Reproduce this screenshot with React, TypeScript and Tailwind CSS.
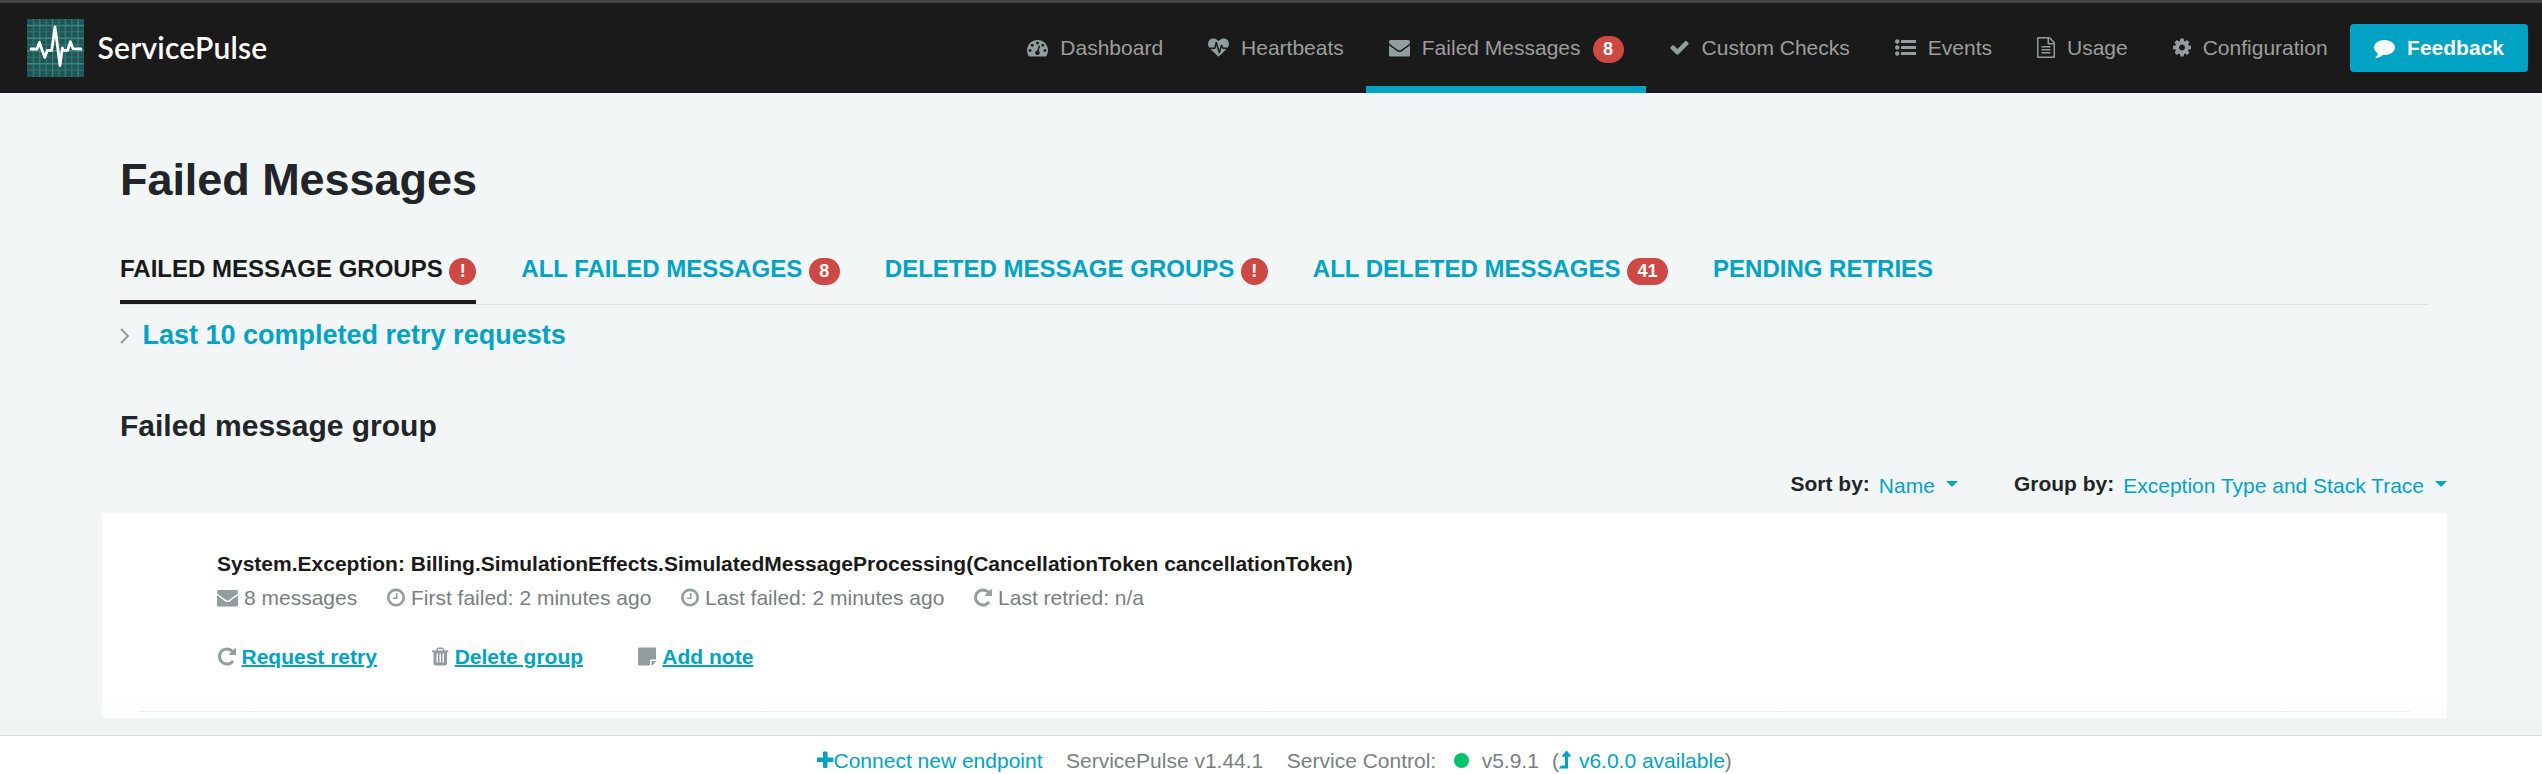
import React from "react";

type IconDef = { box: string; width: string; d: string };

const wide = { box: "0 0 1792 1792", width: "w-[21px]" };
const mid = { box: "128 0 1536 1792", width: "w-[18px]" };
const slim = { box: "192 0 1408 1792", width: "w-[16.5px]" };

const icons: Record<string, IconDef> = {
  dashboard: {
    ...wide,
    d: "M384 1152q0-53-37.5-90.5t-90.5-37.5-90.5 37.5-37.5 90.5 37.5 90.5 90.5 37.5 90.5-37.5 37.5-90.5zm192-448q0-53-37.5-90.5t-90.5-37.5-90.5 37.5-37.5 90.5 37.5 90.5 90.5 37.5 90.5-37.5 37.5-90.5zm428 481l101-382q6-26-7.5-48.5t-38.5-29.5-48 6.5-30 39.5l-101 382q-60 5-107 43.5t-63 98.5q-20 77 20 146t117 89 146-20 89-117q16-60-6-117t-72-91zm660-33q0-53-37.5-90.5t-90.5-37.5-90.5 37.5-37.5 90.5 37.5 90.5 90.5 37.5 90.5-37.5 37.5-90.5zm-640-640q0-53-37.5-90.5t-90.5-37.5-90.5 37.5-37.5 90.5 37.5 90.5 90.5 37.5 90.5-37.5 37.5-90.5zm448 192q0-53-37.5-90.5t-90.5-37.5-90.5 37.5-37.5 90.5 37.5 90.5 90.5 37.5 90.5-37.5 37.5-90.5zm320 448q0 261-141 483-19 29-54 29h-1402q-35 0-54-29-141-221-141-483 0-182 71-348t191-286 286-191 348-71 348 71 286 191 191 286 71 348z",
  },
  heartbeat: {
    ...wide,
    d: "M1280 1024h305q-5 6-10 10.5t-9 7.5l-3 4-623 600q-18 18-44 18t-44-18l-624-602q-5-2-21-20h369q22 0 39.5-13.5t22.5-34.5l70-281 190 667q6 20 23 33t39 13q21 0 38-13t23-33l146-485 56 112q18 35 57 35zm512-428q0 145-103 300h-369l-111-221q-8-17-25.5-27t-36.5-8q-45 5-56 46l-129 430-196-686q-6-20-23.5-33t-39.5-13-39 13.5-22 34.5l-116 464h-423q-103-155-103-300 0-220 127-344t351-124q62 0 126.5 21.5t120 58 95.5 68.5 76 68q36-36 76-68t95.5-68.5 120-58 126.5-21.5q224 0 351 124t127 344z",
  },
  envelope: {
    ...wide,
    d: "M1792 710v794q0 66-47 113t-113 47h-1472q-66 0-113-47t-47-113v-794q44 49 101 87 362 246 497 345 57 42 92.5 65.5t94.5 48 110 24.5h2q51 0 110-24.5t94.5-48 92.5-65.5q170-123 498-345 57-39 100-87zm0-294q0 79-49 151t-122 123q-376 261-468 325-10 7-42.5 31t-54 38.5-52 32.5-57.5 27-50 9h-2q-23 0-50-9t-57.5-27-52-32.5-54-38.5-42.5-31q-91-64-262-182.5t-205-142.5q-62-42-117-115.5t-55-136.5q0-78 41.5-130t118.5-52h1472q65 0 112.5 47t47.5 113z",
  },
  check: {
    ...wide,
    d: "M1671 566q0 40-28 68l-724 724-136 136q-28 28-68 28t-68-28l-136-136-362-362q-28-28-28-68t28-68l136-136q28-28 68-28t68 28l294 295 656-657q28-28 68-28t68 28l136 136q28 28 28 68z",
  },
  list: {
    ...wide,
    d: "M384 1408q0 80-56 136t-136 56-136-56-56-136 56-136 136-56 136 56 56 136zm0-512q0 80-56 136t-136 56-136-56-56-136 56-136 136-56 136 56 56 136zm1408 416v192q0 13-9.5 22.5t-22.5 9.5h-1216q-13 0-22.5-9.5t-9.5-22.5v-192q0-13 9.5-22.5t22.5-9.5h1216q13 0 22.5 9.5t9.5 22.5zm-1408-928q0 80-56 136t-136 56-136-56-56-136 56-136 136-56 136 56 56 136zm1408 416v192q0 13-9.5 22.5t-22.5 9.5h-1216q-13 0-22.5-9.5t-9.5-22.5v-192q0-13 9.5-22.5t22.5-9.5h1216q13 0 22.5 9.5t9.5 22.5zm0-512v192q0 13-9.5 22.5t-22.5 9.5h-1216q-13 0-22.5-9.5t-9.5-22.5v-192q0-13 9.5-22.5t22.5-9.5h1216q13 0 22.5 9.5t9.5 22.5z",
  },
  file: {
    ...mid,
    d: "M1596 380q28 28 48 76t20 88v1152q0 40-28 68t-68 28h-1344q-40 0-68-28t-28-68v-1600q0-40 28-68t68-28h896q40 0 88 20t76 48zm-444-244v376h376q-10-29-22-41l-313-313q-12-12-41-22zm384 1528v-1024h-416q-40 0-68-28t-28-68v-416h-768v1536h1280zm-1024-864q0-14 9-23t23-9h704q14 0 23 9t9 23v64q0 14-9 23t-23 9h-704q-14 0-23-9t-9-23v-64zm736 224q14 0 23 9t9 23v64q0 14-9 23t-23 9h-704q-14 0-23-9t-9-23v-64q0-14 9-23t23-9h704zm0 256q14 0 23 9t9 23v64q0 14-9 23t-23 9h-704q-14 0-23-9t-9-23v-64q0-14 9-23t23-9h704z",
  },
  cog: {
    ...mid,
    d: "M1152 896q0-106-75-181t-181-75-181 75-75 181 75 181 181 75 181-75 75-181zm512-109v222q0 12-8 23t-20 13l-185 28q-19 54-39 91 35 50 107 138 10 12 10 25t-9 23q-27 37-99 108t-94 71q-12 0-26-9l-138-108q-44 23-91 38-16 136-29 186-7 28-36 28h-222q-14 0-24.5-8.5t-11.5-21.5l-28-184q-49-16-90-37l-141 107q-10 9-25 9-14 0-25-11-126-114-165-168-7-10-7-23 0-12 8-23 15-21 51-66.5t54-70.5q-27-50-41-99l-183-27q-13-2-21-12.5t-8-23.5v-222q0-12 8-23t19-13l186-28q14-46 39-92-40-57-107-138-10-12-10-24 0-10 9-23 26-36 98.5-107.5t94.5-71.5q13 0 26 10l138 107q44-23 91-38 16-136 29-186 7-28 36-28h222q14 0 24.5 8.5t11.5 21.5l28 184q49 16 90 37l142-107q9-9 24-9 13 0 25 10 129 119 165 170 7 8 7 22 0 12-8 23-15 21-51 66.5t-54 70.5q26 50 41 98l183 28q13 2 21 12.5t8 23.5z",
  },
  comment: {
    ...wide,
    d: "M1792 896q0 174-120 321.5t-326 233-450 85.5q-70 0-145-8-198 175-460 242-49 14-114 22-17 2-30.5-9t-17.5-29v-1q-3-4-.5-12t2-10 4.5-9.5l6-9 7-8.5 8-9q7-8 31-34.5t34.5-38 31-39.5 32.5-51 27-59 26-76q-157-89-247.5-220t-90.5-281q0-130 71-248.5t191-204.5 286-136.5 348-50.5q244 0 450 85.5t326 233 120 321.5z",
  },
  clock: {
    ...mid,
    d: "M1024 544v448q0 14-9 23t-23 9h-320q-14 0-23-9t-9-23v-64q0-14 9-23t23-9h224v-352q0-14 9-23t23-9h64q14 0 23 9t9 23zm416 352q0-148-73-273t-198-198-273-73-273 73-198 198-73 273 73 273 198 198 273 73 273-73 198-198 73-273zm224 0q0 209-103 385.5t-279.5 279.5-385.5 103-385.5-103-279.5-279.5-103-385.5 103-385.5 279.5-279.5 385.5-103 385.5 103 279.5 279.5 103 385.5z",
  },
  repeat: {
    ...mid,
    d: "M1664 256v448q0 26-19 45t-45 19h-448q-42 0-59-40-17-39 14-69l138-138q-148-137-349-137-104 0-198.5 40.5t-163.5 109.5-109.5 163.5-40.5 198.5 40.5 198.5 109.5 163.5 163.5 109.5 198.5 40.5q119 0 225-52t179-147q7-10 23-12 15 0 25 9l137 138q9 8 9.5 20.5t-7.5 22.5q-109 132-264 204.5t-327 72.5q-156 0-298-61t-245-164-164-245-61-298 61-298 164-245 245-164 298-61q147 0 284.5 55.5t244.5 156.5l130-129q29-31 70-14 39 17 39 59z",
  },
  trash: {
    ...slim,
    d: "M704 1376v-704q0-14-9-23t-23-9h-64q-14 0-23 9t-9 23v704q0 14 9 23t23 9h64q14 0 23-9t9-23zm256 0v-704q0-14-9-23t-23-9h-64q-14 0-23 9t-9 23v704q0 14 9 23t23 9h64q14 0 23-9t9-23zm256 0v-704q0-14-9-23t-23-9h-64q-14 0-23 9t-9 23v704q0 14 9 23t23 9h64q14 0 23-9t9-23zm-544-992h448l-48-117q-7-9-17-11h-317q-10 2-17 11zm928 32v64q0 14-9 23t-23 9h-96v948q0 83-47 143.5t-113 60.5h-832q-66 0-113-58.5t-47-141.5v-952h-96q-14 0-23-9t-9-23v-64q0-14 9-23t23-9h309l70-167q15-37 54-63t79-26h320q40 0 79 26t54 63l70 167h309q14 0 23 9t9 23z",
  },
  note: {
    ...mid,
    d: "M1152 1248v416h-928q-40 0-68-28t-28-68v-1344q0-40 28-68t68-28h1344q40 0 68 28t28 68v928h-416q-40 0-68 28t-28 68zm128 32h381q-15 82-65 132l-184 184q-50 50-132 65v-381z",
  },
  plus: {
    ...slim,
    d: "M1600 736v192q0 40-28 68t-68 28h-416v416q0 40-28 68t-68 28h-192q-40 0-68-28t-28-68v-416h-416q-40 0-68-28t-28-68v-192q0-40 28-68t68-28h416v-416q0-40 28-68t68-28h192q40 0 68 28t28 68v416h416q40 0 68 28t28 68z",
  },
  levelUp: {
    box: "0 0 1024 1792",
    width: "w-[12px]",
    d: "M1018 618q-17 38-58 38h-192v976q0 14-9 23t-23 9h-704q-21 0-29-18-8-20 4-35l160-192q9-11 25-11h320v-752h-192q-41 0-58-38-17-37 9-68l320-384q18-22 49-22t49 22l320 384q27 32 9 68z",
  },
};

function Icon({ name, className = "" }: { name: string; className?: string }) {
  const { box, width, d } = icons[name];
  return (
    <svg viewBox={box} className={`h-[21px] shrink-0 fill-current ${width} ${className}`} aria-hidden="true">
      <path d={d} />
    </svg>
  );
}

function Badge({ children, className = "" }: { children: React.ReactNode; className?: string }) {
  return (
    <span
      className={`flex h-[27px] items-center rounded-[15px] bg-[#ce4844] px-[10.5px] text-[18px] leading-[27px] font-bold text-white ${className}`}
    >
      {children}
    </span>
  );
}

function Logo() {
  const lines = [6.4, 12.8, 19.2, 25.6, 32, 38.3, 44.7, 51.1];
  return (
    <svg viewBox="0 0 57 58" className="h-[58px] w-[57px]" aria-hidden="true">
      <rect width="57" height="58" fill="#1f5757" />
      {lines.map((p, i) => (
        <g key={p} strokeWidth={i % 2 ? 1.1 : 1.5}>
          <line x1={p} x2={p} y1="0" y2="58" stroke={i % 2 ? "#3b8782" : "#2f716e"} />
          <line y1={p} y2={p} x1="0" x2="57" stroke={i % 2 ? "#2f716e" : "#3b8782"} />
        </g>
      ))}
      <path
        d="M4 30h6l2.4-6.6 5.3 15 2.6-7h4.4L28 8l5 38.5 2.4-17.6.9 2.4h4.4l2.6-8.6 2.8 7L54 30"
        fill="none"
        stroke="#fff"
        strokeWidth="2.8"
        strokeLinecap="round"
        strokeLinejoin="round"
      />
    </svg>
  );
}

const navItems = [
  { icon: "dashboard", label: "Dashboard" },
  { icon: "heartbeat", label: "Heartbeats" },
  { icon: "envelope", label: "Failed Messages", badge: "8", active: true },
  { icon: "check", label: "Custom Checks" },
  { icon: "list", label: "Events" },
  { icon: "file", label: "Usage" },
  { icon: "cog", label: "Configuration" },
];

function NavBar() {
  return (
    <header className="flex h-[93px] shrink-0 items-stretch justify-between border-t-[3px] border-[#444] bg-[#1a1a1a] pr-[14px] pl-[27px]">
      <div className="flex items-start gap-[13.5px] pt-4">
        <Logo />
        <span className="pt-[8px] font-['Lato'] text-[30px] leading-[40px] font-semibold tracking-[0.2px] text-white">
          ServicePulse
        </span>
      </div>
      <nav className="flex">
        {navItems.map((item) => (
          <a
            key={item.label}
            className={`flex items-start gap-[12px] border-b-[7px] px-[22.5px] pt-[30px] ${
              item.active ? "border-[#00a3c4]" : "border-transparent"
            }`}
          >
            <Icon name={item.icon} className="mt-[4px] text-[#929e9e]" />
            <span className="leading-[30px] text-[#9d9d9d]">{item.label}</span>
            {item.badge && <Badge className="mt-[3px]">{item.badge}</Badge>}
          </a>
        ))}
        <button className="mt-[21px] flex h-[48px] items-start gap-[12px] rounded-[4px] bg-[#00a3c4] px-[24px] pt-[9px] text-white">
          <Icon name="comment" className="mt-[4px]" />
          <span className="leading-[30px] font-bold">Feedback</span>
        </button>
      </nav>
    </header>
  );
}

const tabs = [
  { label: "Failed Message Groups", badge: "!", active: true },
  { label: "All Failed Messages", badge: "8" },
  { label: "Deleted Message Groups", badge: "!" },
  { label: "All Deleted Messages", badge: "41" },
  { label: "Pending Retries" },
];

function Tabs() {
  return (
    <div className="mr-[113px] ml-[120px] flex h-[59px] gap-[45px] border-b border-[#e0e4e5]">
      {tabs.map((tab) => (
        <a
          key={tab.label}
          className={`flex items-start gap-[6.6px] border-b-4 text-[24px] font-bold uppercase ${
            tab.active ? "border-[#1a1a1a] text-[#1a1a1a]" : "border-transparent text-[#00a3c4]"
          }`}
        >
          <span className="pt-[6px] leading-[34px]">{tab.label}</span>
          {tab.badge && <Badge className="mt-[12px]">{tab.badge}</Badge>}
        </a>
      ))}
    </div>
  );
}

function Picker({ label, value }: { label: string; value: string }) {
  return (
    <div className="flex items-start">
      <span className="leading-[30px] font-bold text-[#212529]">{label}</span>
      <span className="mt-[2px] ml-[9px] leading-[30px] text-[#00a3c4]">{value}</span>
      <svg viewBox="0 0 12 6" className="mt-[12px] ml-[11px] h-[6px] w-[12px] fill-[#00a3c4]" aria-hidden="true">
        <path d="M0 0h12l-6 6z" />
      </svg>
    </div>
  );
}

const facts = [
  { icon: "envelope", text: "8 messages" },
  { icon: "clock", text: "First failed: 2 minutes ago" },
  { icon: "clock", text: "Last failed: 2 minutes ago" },
  { icon: "repeat", text: "Last retried: n/a" },
];

const actions = [
  { icon: "repeat", text: "Request retry" },
  { icon: "trash", text: "Delete group" },
  { icon: "note", text: "Add note" },
];

function GroupCard() {
  return (
    <section className="mr-[95px] ml-[102px] h-[205px] bg-white px-[37px] pt-[36px]">
      <div className="h-[163px] border-b border-[#e9eeee] pl-[78px]">
        <h3 className="leading-[30px] font-bold text-[#1a1a1a]">
          System.Exception: Billing.SimulationEffects.SimulatedMessageProcessing(CancellationToken cancellationToken)
        </h3>
        <div className="mt-[4px] flex gap-[29.7px] text-[#777f7f]">
          {facts.map((f) => (
            <span key={f.text} className="flex items-start gap-[6px]">
              <Icon name={f.icon} className="mt-[4px] text-[#929e9e]" />
              <span className="leading-[30px]">{f.text}</span>
            </span>
          ))}
        </div>
        <div className="mt-[29px] flex gap-[55.3px] pl-[0.5px]">
          {actions.map((a) => (
            <span key={a.text} className="flex items-start gap-[6px]">
              <Icon name={a.icon} className="mt-[4px] text-[#929e9e]" />
              <a className="leading-[30px] font-bold text-[#00a3c4] underline decoration-2">{a.text}</a>
            </span>
          ))}
        </div>
      </div>
    </section>
  );
}

function Footer() {
  return (
    <footer className="flex h-[39px] shrink-0 items-start border-t border-[#dcdfe0] bg-white pt-[10px] pl-[817px] leading-[30px] text-[#777f7f]">
      <a className="flex text-[#00a3c4]">
        <Icon name="plus" className="mt-[4px]" />
        Connect new endpoint
      </a>
      <span className="ml-[23.5px]">ServicePulse v1.44.1</span>
      <span className="ml-[23.5px]">Service Control:</span>
      <span className="mt-[7px] ml-[18px] size-[15px] rounded-full bg-[#00c468]" />
      <span className="ml-[12.5px]">v5.9.1</span>
      <span className="ml-[13px]">(</span>
      <a className="flex gap-[8px] text-[#00a3c4]">
        <Icon name="levelUp" className="mt-[3px]" />
        v6.0.0 available
      </a>
      <span>)</span>
    </footer>
  );
}

export default function App() {
  return (
    <div className="flex h-[774px] w-[2542px] flex-col overflow-hidden bg-[#f2f6f7] font-['Liberation_Sans',sans-serif] text-[21px]">
      <NavBar />
      <main className="relative flex h-[642px] flex-col">
        <h1 className="mt-[60px] ml-[120px] text-[45px] leading-[54px] font-bold tracking-[-0.05px] text-[#212529]">
          Failed Messages
        </h1>
        <div className="h-[39px]" />
        <Tabs />
        <a className="mt-[14px] ml-[120px] flex items-start text-[27px] leading-[32px] font-bold text-[#00a3c4]">
          <svg viewBox="0 0 10 16" className="mt-[9px] mr-[12.5px] h-[16px] w-[10px]" aria-hidden="true">
            <path d="M1 1l7 7-7 7" fill="none" stroke="#929e9e" strokeWidth="2" />
          </svg>
          Last 10 completed retry requests
        </a>
        <h2 className="mt-[57px] ml-[120px] text-[30px] leading-[36px] font-bold text-[#212529]">Failed message group</h2>
        <div className="mt-[25px] mr-[95px] flex h-[44px] justify-end gap-[56px]">
          <Picker label="Sort by:" value="Name" />
          <Picker label="Group by:" value="Exception Type and Stack Trace" />
        </div>
        <GroupCard />
        <div className="absolute inset-x-0 bottom-0 h-[40px] bg-gradient-to-b from-transparent to-[#e4e9ea40]" />
      </main>
      <Footer />
    </div>
  );
}
